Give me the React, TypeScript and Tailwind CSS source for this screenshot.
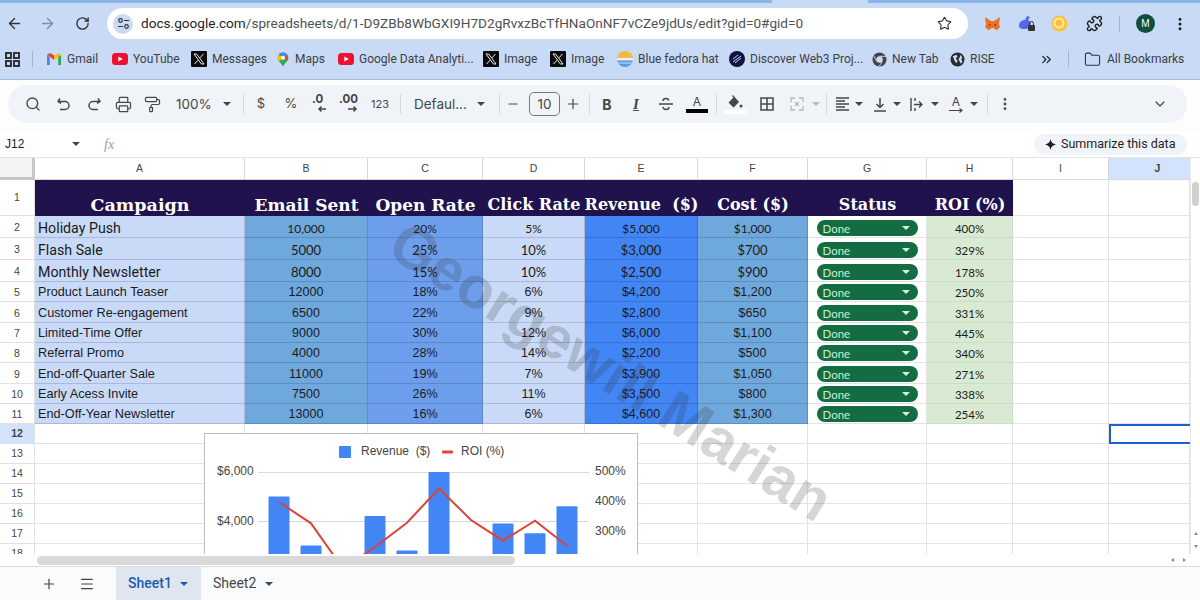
import React from "react";
import {
  ArrowLeft,
  ArrowRight,
  RotateCw,
  Star,
  Search,
  Printer,
  PaintRoller,
  Minus,
  Plus,
  ChevronDown,
  ChevronsRight,
  Folder,
  EllipsisVertical,
  Menu,
  Puzzle,
} from "lucide-react";

const Caret = ({ className = "border-t-[#444]" }: { className?: string }) => (
  <span className={`inline-block w-0 h-0 border-x-[4px] border-x-transparent border-t-[4px] ${className}`} />
);

const XIcon = () => (
  <svg width="16" height="16" viewBox="0 0 16 16" className="shrink-0">
    <rect width="16" height="16" rx="1" fill="#0a0a0a" />
    <path d="M3 3h2.600l7.400 10h-2.600z" fill="none" stroke="#eee" strokeWidth="1" />
    <path d="M12.400 3 9 6.800M7 9.200 3.600 13" stroke="#eee" strokeWidth="1" />
  </svg>
);

const YtIcon = () => (
  <svg width="16" height="16" viewBox="0 0 16 16" className="shrink-0">
    <rect x="0" y="2" width="16" height="12" rx="3.500" fill="#f00f2f" />
    <path d="M6.300 5.400 10.800 8l-4.500 2.600z" fill="#fff" />
  </svg>
);

const GmailIcon = () => (
  <svg width="16" height="16" viewBox="0 0 16 16" className="shrink-0">
    <path d="M1 14V4l2.800 2v8z" fill="#4a86e8" />
    <path d="M15 14V4l-2.800 2v8z" fill="#34a853" />
    <path d="M1 3.500 8 9l1-4-5-3z" fill="#ea4335" />
    <path d="M8 9l4.200-3L15 3.500 12.500 2 8 5.500z" fill="#fbbc04" />
  </svg>
);

const MapsIcon = () => (
  <svg width="14" height="17" viewBox="0 0 16 18" className="shrink-0">
    <path d="M8 1a6 6 0 0 0-6 6c0 4 4 6 6 10 2-4 6-6 6-10a6 6 0 0 0-6-6z" fill="#34a853" />
    <path d="M3 3.500A6 6 0 0 1 8 1a6 6 0 0 1 5 2.500L8 7z" fill="#4285f4" />
    <path d="M2 7a6 6 0 0 1 1-3.500L8 7l-4.500 4C2.600 9.800 2 8.500 2 7z" fill="#fbbc04" />
    <path d="M13 3.500A6 6 0 0 1 14 7c0 1-.3 1.900-.8 2.700L8 7z" fill="#ea4335" />
    <circle cx="8" cy="7" r="2.300" fill="#fff" />
  </svg>
);

const FedoraIcon = () => (
  <svg width="16" height="16" viewBox="0 0 16 16" className="shrink-0">
    <clipPath id="fedora"><circle cx="8" cy="8" r="8" /></clipPath>
    <g clipPath="url(#fedora)">
      <rect width="16" height="7" fill="#f5b942" />
      <rect y="7" width="16" height="2.500" fill="#e8f0f8" />
      <rect y="9.500" width="16" height="6.500" fill="#5b9bd8" />
      <rect y="11.500" width="16" height="1" fill="#cfe2f5" />
    </g>
  </svg>
);

const Web3Icon = () => (
  <svg width="16" height="16" viewBox="0 0 16 16" className="shrink-0">
    <circle cx="8" cy="8" r="8" fill="#10123f" />
    <path d="M4 11 12 5M6 12l6-5M4 8l5-4" stroke="#cfd6ff" strokeWidth="1" />
  </svg>
);

const NewTabIcon = () => (
  <svg width="15" height="15" viewBox="0 0 16 16" className="shrink-0">
    <circle cx="8" cy="8" r="7.500" fill="#444" />
    <circle cx="8" cy="8" r="3.400" fill="#c9daf6" />
    <path d="M8 4.600h7M5 9.800 1.700 4M11 9.800 7.500 15.500" stroke="#c9daf6" strokeWidth="1" />
  </svg>
);

const GlobeIcon = () => (
  <svg width="15" height="15" viewBox="0 0 16 16" className="shrink-0">
    <circle cx="8" cy="8" r="7.500" fill="#2b2b2b" />
    <path d="M3 4.500 7 3l1 2-2 2 2 2-1 3-2-2.500zM11 3l2 2.500-1 3 1.500 1-2 3-1.500-3-1-2 1.500-2z" fill="#c9daf6" />
  </svg>
);

const bookmarks = [
  { icon: <GmailIcon />, label: "Gmail", w: "w-[30px]" },
  { icon: <YtIcon />, label: "YouTube", w: "w-[43px]" },
  { icon: <XIcon />, label: "Messages", w: "w-[49px]" },
  { icon: <MapsIcon />, label: "Maps", w: "w-[28px]" },
  { icon: <YtIcon />, label: "Google Data Analyti...", w: "w-[109px]" },
  { icon: <XIcon />, label: "Image", w: "w-[31px]" },
  { icon: <XIcon />, label: "Image", w: "w-[31px]" },
  { icon: <FedoraIcon />, label: "Blue fedora hat", w: "w-[76px]" },
  { icon: <Web3Icon />, label: "Discover Web3 Proj...", w: "w-[107px]" },
  { icon: <NewTabIcon />, label: "New Tab", w: "w-[43px]" },
  { icon: <GlobeIcon />, label: "RISE", w: "w-[21px]" },
];

function BrowserBar() {
  return (
    <div className="bg-[#c9daf6] h-[80px] border-b border-[#a8bcd9] shrink-0">
      <div className="flex h-[3px]">
        <div className="w-[772px] bg-[#8ab4ea]" />
        <div className="w-[96px]" />
        <div className="flex-1 bg-[#8ab4ea]" />
      </div>
      <div className="flex items-center h-[41px]">
        <ArrowLeft size={17} strokeWidth={2} className="ml-[6px] text-[#333]" />
        <ArrowRight size={17} strokeWidth={2} className="ml-[16px] text-[#7f8ea6]" />
        <RotateCw size={15} strokeWidth={2.200} className="ml-[19px] text-[#333]" />
        <div className="ml-[17px] w-[861px] h-[31px] bg-white rounded-full flex items-center">
          <div className="ml-[6px] w-[20px] h-[20px] rounded-full bg-[#c9daf6] flex items-center justify-center">
            <svg width="13" height="13" viewBox="0 0 13 13" fill="none" stroke="#333" strokeWidth="1.200">
              <circle cx="3.500" cy="3.500" r="1.800" />
              <path d="M7 3.500h5M1 9.500h5" />
              <circle cx="9.500" cy="9.500" r="1.800" />
            </svg>
          </div>
          <div className="ml-[8px] w-[800px] whitespace-nowrap text-[13.600px] font-['Roboto',sans-serif] text-[#4d5156]">
            <span className="text-[#1f1f1f]">docs.google.com</span>/spreadsheets/d/1-D9ZBb8WbGXI9H7D2gRvxzBcTfHNaOnNF7vCZe9jdUs/edit?gid=0#gid=0
          </div>
          <Star size={15} strokeWidth={1.800} className="text-[#333] -ml-[4px]" />
        </div>
        <svg width="17" height="16" viewBox="0 0 17 16" className="ml-[16px]">
          <path d="M1 1l6 4h3l6-4-1 7 1 3-3 3-3-1H7l-3 1-3-3 1-3z" fill="#e8722a" />
          <path d="M5 8l2 1-2 1zM12 8l-2 1 2 1z" fill="#333" />
          <path d="M7 12h3v1.500H7z" fill="#f4d0b0" />
        </svg>
        <svg width="18" height="17" viewBox="0 0 18 17" className="ml-[17px]">
          <path d="M1 11c0-4 3-6 6-6l2-4 3 1-2 3c2 1 3 3 3 4l-4 5H5c-2 0-4-1-4-3z" fill="#5568e8" />
          <rect x="10" y="10" width="7" height="6" rx="1" fill="#333" />
          <path d="M11.500 10V8.500a2 2 0 0 1 4 0V10" fill="none" stroke="#333" />
        </svg>
        <svg width="17" height="17" viewBox="0 0 17 17" className="ml-[15px]">
          <circle cx="8.500" cy="8.500" r="8" fill="#f8c23c" />
          <circle cx="8" cy="8" r="4.500" fill="none" stroke="#fdeaa0" strokeWidth="2" />
        </svg>
        <Puzzle size={17} strokeWidth={2} className="ml-[18px] text-[#222]" />
        <div className="ml-[16px] w-px h-[16px] bg-[#9db5d8]" />
        <div className="ml-[16px] w-[19px] h-[19px] rounded-full bg-[#0e4f3f] text-white text-[10px] flex items-center justify-center font-['Liberation_Sans',sans-serif]">M</div>
        <EllipsisVertical size={16} strokeWidth={2.500} className="ml-[17px] text-[#222]" />
      </div>
      <div className="flex items-center h-[30px] font-['Roboto',sans-serif] text-[12px] text-[#3c4043] whitespace-nowrap">
        <svg width="15" height="15" viewBox="0 0 15 15" fill="none" stroke="#222" strokeWidth="1.800" className="ml-[5px]">
          <rect x="1" y="1" width="5" height="5" />
          <rect x="9" y="1" width="5" height="5" />
          <rect x="1" y="9" width="5" height="5" />
          <rect x="9" y="9" width="5" height="5" />
        </svg>
        <div className="ml-[12px] mr-[13px] w-px h-[16px] bg-[#9db5d8]" />
        <div className="flex items-center gap-[15px]">
          {bookmarks.map((b, i) => (
            <div key={i} className="flex items-center gap-[5px]">
              {b.icon}
              <span className={b.w}>{b.label}</span>
            </div>
          ))}
        </div>
        <ChevronsRight size={15} strokeWidth={2} className="ml-[48px] text-[#222]" />
        <div className="ml-[14px] w-px h-[16px] bg-[#9db5d8]" />
        <Folder size={17} strokeWidth={1.500} className="ml-[15px] text-[#333]" />
        <span className="ml-[6px]">All Bookmarks</span>
      </div>
    </div>
  );
}

const Slot = ({ w, children }: { w: string; children?: React.ReactNode }) => (
  <div className={`flex items-center justify-center shrink-0 h-full whitespace-nowrap ${w}`}>{children}</div>
);

const Sep = ({ w }: { w: string }) => (
  <Slot w={w}><div className="w-px h-[20px] bg-[#d5d8dd]" /></Slot>
);

function Toolbar() {
  return (
    <div className="h-[51px] bg-[#fdfdfe] px-[8px] pt-[5px] shrink-0">
      <div className="h-[38px] w-[1179px] rounded-full bg-[#f0f4f9] flex items-center pl-[9px] text-[#444746] text-[13px] font-['Inter',sans-serif]">
        <Slot w="w-[31px]"><Search size={16} strokeWidth={2} /></Slot>
        <Slot w="w-[31px]">
          <svg width="14" height="14" viewBox="0 0 14 14" fill="none" stroke="currentColor" strokeWidth="1.500"><path d="M3 1.500 1 4.500l3 2M1.500 4.500H8a4 4 0 0 1 0 8H3" /></svg>
        </Slot>
        <Slot w="w-[30px]">
          <svg width="14" height="14" viewBox="0 0 14 14" fill="none" stroke="currentColor" strokeWidth="1.500"><path d="M11 1.500l2 3-3 2M12.500 4.500H6a4 4 0 0 0 0 8h5" /></svg>
        </Slot>
        <Slot w="w-[29px]"><Printer size={17} strokeWidth={1.700} /></Slot>
        <Slot w="w-[28px]"><PaintRoller size={17} strokeWidth={1.700} /></Slot>
        <Slot w="w-[50px]"><span className="pl-[10px] w-full text-[13.500px]">100%</span></Slot>
        <Slot w="w-[22px]"><Caret /></Slot>
        <Sep w="w-[10px]" />
        <Slot w="w-[26px]">$</Slot>
        <Slot w="w-[34px]">%</Slot>
        <Slot w="w-[20px]">
          <svg width="18" height="22" viewBox="0 0 18 22" className="shrink-0">
            <text x="3" y="10" fontSize="11.500" fontWeight="700" fill="currentColor" fontFamily="Inter">.0</text>
            <path d="M17 16H10m2.500-2.500L10 16l2.500 2.500" fill="none" stroke="currentColor" strokeWidth="1.500" />
          </svg>
        </Slot>
        <Slot w="w-[44px]">
          <svg width="24" height="22" viewBox="0 0 24 22" className="shrink-0">
            <text x="1" y="10" fontSize="11.500" fontWeight="700" fill="currentColor" fontFamily="Inter">.00</text>
            <path d="M10 16h8m-2.500-2.500L18 16l-2.500 2.500" fill="none" stroke="currentColor" strokeWidth="1.500" />
          </svg>
        </Slot>
        <Slot w="w-[16px]"><span className="text-[11px]">123</span></Slot>
        <Sep w="w-[24px]" />
        <Slot w="w-[58px]"><span className="pl-[2px] w-full text-[13.500px]">Defaul...</span></Slot>
        <Slot w="w-[22px]"><Caret /></Slot>
        <Sep w="w-[14px]" />
        <Slot w="w-[14px]"><Minus size={14} strokeWidth={1.800} /></Slot>
        <div className="w-[9px]" />
        <div className="w-[31px] h-[24px] border border-[#747775] rounded-[5px] flex items-center justify-center text-[13.500px] shrink-0">10</div>
        <Slot w="w-[26px]"><Plus size={16} strokeWidth={1.800} /></Slot>
        <Sep w="w-[6px]" />
        <Slot w="w-[30px]"><span className="font-bold text-[14px]">B</span></Slot>
        <Slot w="w-[28px]"><span className="italic font-bold text-[15px] font-['Liberation_Serif',serif] underline underline-offset-1">I</span></Slot>
        <Slot w="w-[32px]">
          <svg width="16" height="16" viewBox="0 0 16 16" fill="none" stroke="currentColor" strokeWidth="1.400"><path d="M1 8h14M11 4.500C10.500 3 9.500 2.500 8 2.500S5 3.300 5 5M5 11c.3 1.500 1.500 2.500 3 2.500s3-1 3-2.500" /></svg>
        </Slot>
        <Slot w="w-[30px]">
          <div className="flex flex-col items-center w-[22px] leading-none">
            <span className="text-[12px] mb-[1px]">A</span>
            <div className="w-[22px] h-[4px] bg-black" />
          </div>
        </Slot>
        <Sep w="w-[8px]" />
        <Slot w="w-[30px]">
          <div className="flex flex-col items-center w-[22px]">
            <svg width="16" height="15" viewBox="0 0 16 15" fill="currentColor"><path d="M6 0 5 1l1.500 1.500L1.500 7.500 6.500 12.500 12 7z" /><circle cx="14" cy="11" r="1.500" /></svg>
            <div className="w-[22px] h-[4px] bg-white" />
          </div>
        </Slot>
        <Slot w="w-[34px]">
          <svg width="14" height="14" viewBox="0 0 14 14" fill="none" stroke="currentColor" strokeWidth="1.500"><rect x="1" y="1" width="12" height="12" /><path d="M7 1v12M1 7h12" /></svg>
        </Slot>
        <Slot w="w-[26px]">
          <svg width="14" height="14" viewBox="0 0 14 14" fill="none" stroke="#b4b8bd" strokeWidth="1.300"><path d="M1 5V1h4M9 1h4v4M1 9v4h4M9 13h4V9M5 5l2 2-2 2M9 5 7 7l2 2" /></svg>
        </Slot>
        <Slot w="w-[12px]"><Caret className="border-t-[#b4b8bd]" /></Slot>
        <Sep w="w-[8px]" />
        <Slot w="w-[24px]">
          <svg width="15" height="14" viewBox="0 0 15 14" stroke="currentColor" strokeWidth="1.300"><path d="M1 1h13M1 4h9M1 7h13M1 10h9M1 13h13" /></svg>
        </Slot>
        <Slot w="w-[10px]"><Caret /></Slot>
        <div className="w-[4px]" />
        <Slot w="w-[24px]">
          <svg width="14" height="15" viewBox="0 0 14 15" fill="none" stroke="currentColor" strokeWidth="1.500"><path d="M7 1v9M3.500 7 7 10.500 10.500 7M1 14h12" /></svg>
        </Slot>
        <Slot w="w-[10px]"><Caret /></Slot>
        <div className="w-[5px]" />
        <Slot w="w-[20px]">
          <svg width="14" height="13" viewBox="0 0 14 13" fill="none" stroke="currentColor" strokeWidth="1.400"><path d="M1 0v13M4 6.500h8M9 3.500l3 3-3 3M5 0v3M5 10v3" /></svg>
        </Slot>
        <Slot w="w-[15px]"><Caret /></Slot>
        <div className="w-[3px]" />
        <Slot w="w-[22px]">
          <div className="flex flex-col items-center leading-none">
            <span className="text-[12px]">A</span>
            <svg width="14" height="5" viewBox="0 0 14 5" fill="none" stroke="currentColor" strokeWidth="1.200"><path d="M0 2.500h13M10.500 .500l2.500 2-2.500 2" /></svg>
          </div>
        </Slot>
        <Slot w="w-[14px]"><Caret /></Slot>
        <Sep w="w-[12px]" />
        <Slot w="w-[24px]"><EllipsisVertical size={16} strokeWidth={2.200} /></Slot>
        <div className="w-[135px]" />
        <ChevronDown size={16} strokeWidth={1.800} />
      </div>
    </div>
  );
}

function FormulaBar() {
  return (
    <div className="h-[27px] bg-white flex items-center shrink-0 border-b border-[#e0e2e5] relative">
      <span className="ml-[5px] w-[67px] text-[12px] text-[#222] font-['Liberation_Sans',sans-serif]">J12</span>
      <Caret />
      <span className="ml-[24px] text-[14px] italic text-[#9aa0a6] font-['Liberation_Serif',serif]">fx</span>
      <div className="ml-auto mr-[13px] h-[21px] w-[153px] rounded-full bg-[#f0f4f9] flex items-center pl-[11px] text-[12.500px] text-[#1f1f1f] font-['Roboto',sans-serif]">
        <svg width="11" height="11" viewBox="0 0 12 12" className="mr-[5px]"><path d="M6 0c.6 3.500 2.500 5.400 6 6-3.500.6-5.400 2.500-6 6-.6-3.500-2.500-5.400-6-6 3.500-.6 5.400-2.500 6-6z" fill="#1f1f1f" /></svg>
        Summarize this data
      </div>
    </div>
  );
}

const rows = [
  ["Holiday Push", "10,000", "20%", "5%", "$5,000", "$1,000", "400%"],
  ["Flash Sale", "5000", "25%", "10%", "$3,000", "$700", "329%"],
  ["Monthly Newsletter", "8000", "15%", "10%", "$2,500", "$900", "178%"],
  ["Product Launch Teaser", "12000", "18%", "6%", "$4,200", "$1,200", "250%"],
  ["Customer Re-engagement", "6500", "22%", "9%", "$2,800", "$650", "331%"],
  ["Limited-Time Offer", "9000", "30%", "12%", "$6,000", "$1,100", "445%"],
  ["Referral Promo", "4000", "28%", "14%", "$2,200", "$500", "340%"],
  ["End-off-Quarter Sale", "11000", "19%", "7%", "$3,900", "$1,050", "271%"],
  ["Early Acess Invite", "7500", "26%", "11%", "$3,500", "$800", "338%"],
  ["End-Off-Year Newsletter", "13000", "16%", "6%", "$4,600", "$1,300", "254%"],
];

const columns = ["A", "B", "C", "D", "E", "F", "G", "H", "I", "J"];

const headers = [
  { t: "Campaign", c: "text-[17.500px]" },
  { t: "Email Sent", c: "text-[17px]" },
  { t: "Open Rate", c: "text-[17px]" },
  { t: "Click Rate", c: "text-[16px]" },
  { t: "Revenue  ($)", c: "text-[16px]" },
  { t: "Cost ($)", c: "text-[16px]" },
  { t: "Status", c: "text-[16px]" },
  { t: "ROI (%)", c: "text-[16px]" },
];

const colBg = ["bg-[#6fa8dc]", "bg-[#6d9eeb]", "bg-[#c9daf8]", "bg-[#4285f4]", "bg-[#6fa8dc]"];

const numFont = (i: number) =>
  i === 0
    ? "font-['Lato',sans-serif] text-[12px]"
    : i < 3
    ? "font-['Lato',sans-serif] text-[13px]"
    : "font-['Liberation_Sans',sans-serif] text-[12.500px]";

const rowHeader = "flex items-center justify-center bg-white border-b border-r border-[#dfe1e4] text-[10.500px] text-[#444] font-['Liberation_Sans',sans-serif]";
const emptyCell = "bg-white border-b border-r border-[#e2e3e3]";
const dataCell = "flex items-end justify-center border-b border-r border-black/15 text-[#1b1b1b] leading-[17px] overflow-hidden whitespace-nowrap";

function Sheet() {
  return (
    <div className="relative h-[396px] flex-1 overflow-hidden">
      <div className="grid grid-cols-[35px_210px_123px_115px_102px_113px_110px_119px_86px_96px_81px] grid-rows-[22px_36px_22px_22px_22px_20px_21px_20px_20px_21px_20px_20px_20px_20px_20px_20px_20px_20px_20px] w-[1190px]">
        <div className="bg-[#f1f3f4] border-r-[3px] border-b-[3px] border-[#c7c7c7]" />
        {columns.map((c) => (
          <div
            key={c}
            className={`flex items-center justify-center border-b border-r border-[#d5d7da] text-[10.500px] text-[#444] font-['Liberation_Sans',sans-serif] ${c === "J" ? "bg-[#d3e3fd] font-bold pl-[16px] border-r-0" : "bg-white"}`}
          >
            {c}
          </div>
        ))}

        <div className={rowHeader}>1</div>
        {headers.map((h) => (
          <div key={h.t} className={`flex items-end justify-center bg-[#20124d] text-white font-bold font-['DejaVu_Serif',serif] whitespace-pre leading-[22px] ${h.c}`}>
            {h.t}
          </div>
        ))}
        <div className={emptyCell} />
        <div className={emptyCell} />

        {rows.map((r, i) => (
          <React.Fragment key={r[0]}>
            <div className={`${rowHeader} pt-[3px]`}>{i + 2}</div>
            <div
              className={`${dataCell} !justify-start pl-[3px] bg-[#c9daf8] ${
                i < 3 ? "font-['Roboto',sans-serif] text-[14.200px]" : "font-['Liberation_Sans',sans-serif] text-[12.700px]"
              }`}
            >
              {r[0]}
            </div>
            {r.slice(1, 6).map((v, j) => (
              <div key={j} className={`${dataCell} ${colBg[j]} ${numFont(i)}`}>{v}</div>
            ))}
            <div className="flex items-end justify-center bg-white border-b border-r border-[#e2e3e3] pb-[1px]">
              <div className="w-[101px] h-[16px] rounded-full bg-[#146c43] flex items-center justify-between pl-[6px] pr-[8px] text-[11.500px] text-[#cbeecb] font-['Lato',sans-serif]">
                <span className="pt-[2px]">Done</span>
                <Caret className="border-t-[#d9f2d9]" />
              </div>
            </div>
            <div className={`${dataCell} !border-black/5 !leading-[16px] bg-[#d9ead3] font-['Lato',sans-serif] text-[11.500px]`}>{r[6]}</div>
            <div className={emptyCell} />
            <div className={emptyCell} />
          </React.Fragment>
        ))}

        {[12, 13, 14, 15, 16, 17, 18].map((n) => (
          <React.Fragment key={n}>
            <div className={`${rowHeader} ${n === 12 ? "!bg-[#d3e3fd] font-bold text-[#0b2a5e]" : ""}`}>{n}</div>
            {columns.map((c) => (
              <div key={c} className={n === 12 && c === "J" ? "bg-white border-2 border-r-0 border-[#1f5fd6]" : emptyCell} />
            ))}
          </React.Fragment>
        ))}
      </div>
      <Chart />
    </div>
  );
}

const revenue = [5000, 3000, 2500, 4200, 2800, 6000, 2200, 3900, 3500, 4600];
const roi = [400, 329, 178, 250, 331, 445, 340, 271, 338, 254];
const xs = revenue.map((_, i) => 279 + i * 32);

function Chart() {
  return (
    <div className="absolute left-[204px] top-[275px] w-[434px] h-[160px] bg-white border border-[#bdbdbd]">
      <svg width="432" height="158" viewBox="205 434 432 158" fontFamily="'Liberation Sans', sans-serif" fontSize="12" fill="#444">
        <rect x="339" y="446" width="12" height="12" rx="1" fill="#4285f4" />
        <text x="361" y="455" xmlSpace="preserve">Revenue  ($)</text>
        <rect x="442" y="450.500" width="11" height="3" rx="1" fill="#ea4335" />
        <text x="461" y="455">ROI (%)</text>
        <text x="217" y="475">$6,000</text>
        <text x="217" y="525">$4,000</text>
        <text x="595" y="475">500%</text>
        <text x="595" y="505">400%</text>
        <text x="595" y="535">300%</text>
        <path d="M258 472.500H589M258 521.500H589" stroke="#d9d9d9" strokeWidth="1" />
        {revenue.map((v, i) => {
          const top = 472 + (6000 - v) * 0.0245;
          return <rect key={i} x={xs[i] - 10.500} y={top} width="21" height={620 - top} rx="1" fill="#4285f4" />;
        })}
        <polyline
          points={roi.map((v, i) => `${xs[i]},${472 + (500 - v) * 0.3}`).join(" ")}
          fill="none"
          stroke="#db4437"
          strokeWidth="2"
        />
      </svg>
    </div>
  );
}

function ScrollColumn() {
  return (
    <div className="w-[10px] h-[396px] bg-white border-l border-[#e8eaed] flex flex-col items-center relative">
      <div className="mt-[24px] w-[7px] h-[24px] rounded-full bg-[#d0d0d0]" />
      <div className="mt-auto mb-[6px] flex flex-col items-center gap-[10px]">
        <span className="w-0 h-0 border-x-[2.500px] border-x-transparent border-b-[3px] border-b-[#888]" />
        <span className="w-0 h-0 border-x-[2.500px] border-x-transparent border-t-[3px] border-t-[#888]" />
      </div>
    </div>
  );
}

function BottomScroll() {
  return (
    <div className="h-[12px] bg-white flex items-center shrink-0">
      <div className="ml-[37px] w-[478px] h-[9px] rounded-full bg-[#d9d9d9]" />
      <div className="ml-auto mr-[14px] flex items-center gap-[9px]">
        <span className="w-0 h-0 border-y-[2.500px] border-y-transparent border-r-[3px] border-r-[#888]" />
        <span className="w-0 h-0 border-y-[2.500px] border-y-transparent border-l-[3px] border-l-[#888]" />
      </div>
    </div>
  );
}

function SheetTabs() {
  return (
    <div className="h-[34px] bg-[#f9fbfd] border-t border-[#dadce0] flex items-stretch shrink-0 text-[14px] font-['Roboto',sans-serif] text-[#444746]">
      <div className="flex items-center">
        <Plus size={16} strokeWidth={1.800} className="ml-[41px]" />
        <Menu size={16} strokeWidth={1.800} className="ml-[22px]" />
      </div>
      <div className="ml-[21px] w-[85px] bg-[#dfe6f0] flex items-center pl-[12px] text-[#1a5bb5] font-medium">
        Sheet1
        <span className="ml-[8px] flex"><Caret className="border-t-[#1a5bb5]" /></span>
      </div>
      <div className="flex items-center pl-[12px]">
        Sheet2
        <span className="ml-[9px] flex"><Caret /></span>
      </div>
    </div>
  );
}

export default function App() {
  return (
    <div className="relative w-[1200px] h-[600px] overflow-hidden flex flex-col bg-white">
      <BrowserBar />
      <Toolbar />
      <FormulaBar />
      <div className="flex h-[396px] shrink-0">
        <Sheet />
        <ScrollColumn />
      </div>
      <BottomScroll />
      <SheetTabs />
      <div className="absolute left-[611px] top-[372px] -translate-x-1/2 -translate-y-1/2 rotate-[32deg] whitespace-nowrap text-[59px] font-bold text-[#333]/20 font-['Liberation_Sans',sans-serif] pointer-events-none">
        Georgewill Marian
      </div>
    </div>
  );
}
